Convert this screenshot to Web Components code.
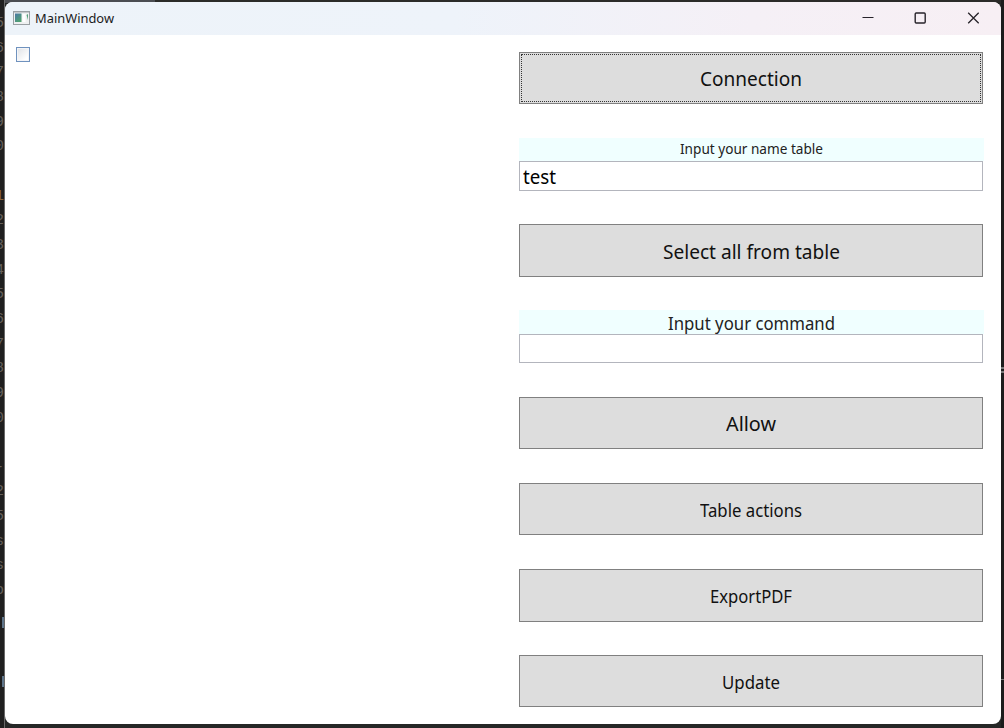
<!DOCTYPE html>
<html lang="en">
<head>
<meta charset="utf-8">
<title>MainWindow</title>
<style>
html,body{margin:0;width:1004px;height:728px;overflow:hidden;background:#232323;font-family:"Noto Sans","Open Sans",sans-serif}
</style>
</head>
<body>
<app-desktop></app-desktop>
<script>
const define=(name,html,setup)=>customElements.define(name,class extends HTMLElement{
  connectedCallback(){
    if(this.shadowRoot)return;
    const t=document.createElement('template');
    t.innerHTML=html;
    this.attachShadow({mode:'open'}).append(t.content.cloneNode(true));
    if(setup)setup(this,this.shadowRoot);
  }
});

/* Text set at a fixed size and condensed to the given width */
define('fit-text',`<style>
:host{display:block;flex:none;white-space:nowrap;line-height:24px;height:24px}
span{display:inline-block;transform-origin:0 50%}
</style><span><slot></slot></span>`,(el,root)=>{
  const s=root.querySelector('span'),w=+el.getAttribute('width');
  el.style.fontSize=el.getAttribute('size')+'px';
  el.style.width=w+'px';
  s.style.transform='scaleX('+w/s.getBoundingClientRect().width+')';
});

define('wpf-button',`<style>
:host{display:block;box-sizing:border-box;height:52px;padding:1px;border:1px solid #808080;background:#ddd;color:#111}
.in{box-sizing:border-box;height:100%;display:flex;align-items:center;justify-content:center;border:1px solid transparent;padding-top:2px}
:host([tall]){height:53px}
:host([tall]) .in{padding-top:3px}
:host([focused]) .in{border:1px dotted #333}
</style><div class="in"><slot></slot></div>`);

define('wpf-label',`<style>
:host{display:flex;box-sizing:border-box;justify-content:center;height:24px;width:465px;background:#f0ffff;color:#222}
</style><slot></slot>`);

define('wpf-input',`<style>
:host{display:flex;box-sizing:border-box;align-items:center;border:1px solid #b3b5bd;background:#fff;color:#000;padding:0 0 0 3px}
</style><slot></slot>`);

define('wpf-check',`<style>
:host{display:block;box-sizing:border-box;width:14px;height:15px;border:1px solid #6f92be;background:linear-gradient(135deg,#dfe1e5,#fff 80%);box-shadow:inset 0 0 0 1px #f4f5f8}
</style>`);

define('title-bar',`<style>
:host{display:flex;align-items:center;box-sizing:border-box;height:33px;padding-left:8px;background:linear-gradient(90deg,#edf3f9,#eef3fa 45%,#f5f0f6 75%,#f7eff4);color:#1b1b1b}
svg{display:block;flex:none}
.name{flex:1;padding:0 0 2px 5px}
.controls{display:flex;padding-right:2px}
.controls svg{width:52.5px;height:33px}
</style>
<svg width="17" height="14" viewBox="0 0 17 14" style="margin-top:-2px"><rect x=".5" y=".5" width="16" height="13" fill="#eef0f1" stroke="#999fa3"/><path d="M1 1.5H16" stroke="#c5c9cc"/><defs><linearGradient id="g" x2=".7" y2="1"><stop stop-color="#4b77a6"/><stop offset="1" stop-color="#4fa36f"/></linearGradient></defs><rect x="2" y="2.5" width="6.5" height="8.5" fill="url(#g)"/><rect x="9.5" y="3" width="3" height="8" fill="#fff"/><path d="M15 3L13.5 4L15 9Z" fill="#55a27a"/></svg>
<div class="name"><fit-text size="13.3" width="79">MainWindow</fit-text></div>
<div class="controls">
<svg viewBox="0 0 52.5 33"><path d="M20.5 15.5H31.5" stroke="#27232a" stroke-width="1.1"/></svg>
<svg viewBox="0 0 52.5 33"><rect x="21.2" y="11" width="10" height="10" rx="1" fill="none" stroke="#27232a" stroke-width="1.4"/></svg>
<svg viewBox="0 0 52.5 33"><path d="M21.2 10.8L31.7 21.3M31.7 10.8L21.2 21.3" stroke="#27232a" stroke-width="1.3"/></svg>
</div>`);

define('main-window',`<style>
:host{display:block;width:996px;height:722px;margin-top:2px;border-radius:8px;overflow:hidden;background:#fff}
.body{display:grid;grid-template-columns:514px 464px;height:689px}
.left{padding:12px 0 0 11px}
.right{display:flex;flex-direction:column;padding-top:17px}
.right>*{flex:none}
.g{margin-top:34px}
.up{margin-top:-2px}
</style>
<title-bar></title-bar>
<div class="body">
<div class="left"><wpf-check></wpf-check></div>
<div class="right">
<wpf-button focused><fit-text class="up" size="20.3" width="102">Connection</fit-text></wpf-button>
<wpf-label class="g" style="height:23px"><fit-text size="13.5" width="143" style="margin-top:-1px">Input your name table</fit-text></wpf-label>
<wpf-input style="height:30px"><fit-text size="20.3" width="33">test</fit-text></wpf-input>
<wpf-button tall style="margin-top:33px"><fit-text class="up" size="20.3" width="177">Select all from table</fit-text></wpf-button>
<wpf-label style="margin-top:33px"><fit-text size="17.3" width="167" style="margin-top:2px">Input your command</fit-text></wpf-label>
<wpf-input style="height:29px"></wpf-input>
<wpf-button class="g"><fit-text class="up" size="20.3" width="50">Allow</fit-text></wpf-button>
<wpf-button class="g"><fit-text size="17.5" width="102">Table actions</fit-text></wpf-button>
<wpf-button tall class="g"><fit-text size="17.5" width="82" style="margin-top:-2px">ExportPDF</fit-text></wpf-button>
<wpf-button style="margin-top:33px"><fit-text size="17.5" width="58">Update</fit-text></wpf-button>
</div>
</div>`);

/* Sliver of the code editor behind the window */
define('editor-gutter',`<style>
:host{display:flex;flex-direction:column;box-sizing:border-box;width:5px;height:728px;padding-top:12px;overflow:hidden;background:#1f1f1f;border-right:1px solid #686868;font-family:"Liberation Mono",monospace;font-size:15px;color:#65605b}
span{display:flex;justify-content:flex-end;flex:none;height:24.67px;line-height:24.67px;width:4px}
i{flex:none;width:2px;height:11px;margin:13px 0 0 2px;background:#5d7388}
i+i{margin-top:48px}
</style>`,(el,root)=>{
  [...'567890 1234567890 -25'].concat(['s','s','o']).forEach(c=>{
    const s=document.createElement('span');
    s.textContent=c;
    if(c==='1')s.style.color='#8a6439';
    root.append(s);
  });
  root.append(document.createElement('i'),document.createElement('i'));
});

define('editor-edge',`<style>
:host{display:flex;flex-direction:column;width:3px;height:728px;background:#1c1c1c}
i{width:3px;flex:none}
</style><i style="height:367px"></i><i style="height:2px;background:#777"></i><i style="height:2px"></i><i style="height:2px;background:#777"></i><i style="height:306px"></i><i style="height:1px;background:#777"></i>`);

define('app-desktop',`<style>
:host{display:flex;width:1004px;height:728px;background:linear-gradient(90deg,#4b4d52 155px,#2b2b29 155px) 0 0/100% 3px no-repeat,#252726}
</style><editor-gutter></editor-gutter><main-window></main-window><editor-edge></editor-edge>`);
</script>
</body>
</html>
